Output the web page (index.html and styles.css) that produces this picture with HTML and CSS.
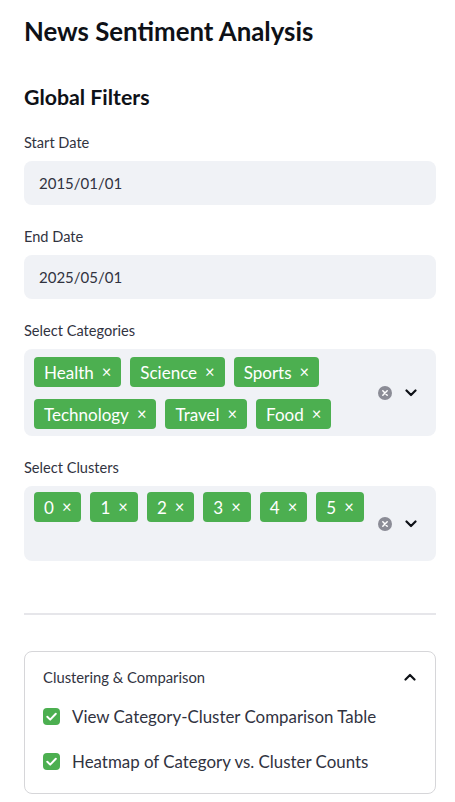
FILE: index.html
```html
<!DOCTYPE html>
<html lang="en">
<head>
<meta charset="utf-8">
<title>News Sentiment Analysis</title>
<link rel="stylesheet" href="styles.css">
</head>
<body>
<aside class="sidebar">
  <h1 class="title">News Sentiment Analysis</h1>
  <h2 class="subtitle">Global Filters</h2>

  <div class="field">
    <label class="label">Start Date</label>
    <div class="input">2015/01/01</div>
  </div>

  <div class="field">
    <label class="label">End Date</label>
    <div class="input">2025/05/01</div>
  </div>

  <div class="field">
    <label class="label">Select Categories</label>
    <div class="multiselect">
      <div class="tags">
        <span class="tag">Health<span class="tag-x">×</span></span>
        <span class="tag">Science<span class="tag-x">×</span></span>
        <span class="tag">Sports<span class="tag-x">×</span></span>
        <span class="tag">Technology<span class="tag-x">×</span></span>
        <span class="tag">Travel<span class="tag-x">×</span></span>
        <span class="tag">Food<span class="tag-x">×</span></span>
      </div>
      <div class="ms-icons">
        <svg class="clear-icon" viewBox="0 0 14 14" width="14" height="14"><circle cx="7" cy="7" r="7" fill="#8b8c96"/><path d="M4.8 4.8 L9.2 9.2 M9.2 4.8 L4.8 9.2" stroke="#fff" stroke-width="1.5" stroke-linecap="round"/></svg>
        <svg class="chev" viewBox="0 0 12 8" width="12" height="8"><path d="M1.5 1.5 L6 6 L10.5 1.5" fill="none" stroke="#0e1117" stroke-width="2.2" stroke-linecap="round" stroke-linejoin="round"/></svg>
      </div>
    </div>
  </div>

  <div class="field">
    <label class="label">Select Clusters</label>
    <div class="multiselect">
      <div class="tags tags-wrap-input">
        <span class="tag">0<span class="tag-x">×</span></span>
        <span class="tag">1<span class="tag-x">×</span></span>
        <span class="tag">2<span class="tag-x">×</span></span>
        <span class="tag">3<span class="tag-x">×</span></span>
        <span class="tag">4<span class="tag-x">×</span></span>
        <span class="tag">5<span class="tag-x">×</span></span>
        <span class="ms-input"></span>
      </div>
      <div class="ms-icons">
        <svg class="clear-icon" viewBox="0 0 14 14" width="14" height="14"><circle cx="7" cy="7" r="7" fill="#8b8c96"/><path d="M4.8 4.8 L9.2 9.2 M9.2 4.8 L4.8 9.2" stroke="#fff" stroke-width="1.5" stroke-linecap="round"/></svg>
        <svg class="chev" viewBox="0 0 12 8" width="12" height="8"><path d="M1.5 1.5 L6 6 L10.5 1.5" fill="none" stroke="#0e1117" stroke-width="2.2" stroke-linecap="round" stroke-linejoin="round"/></svg>
      </div>
    </div>
  </div>

  <hr class="divider">

  <section class="expander">
    <div class="exp-header">
      <span>Clustering &amp; Comparison</span>
      <svg class="chev" viewBox="0 0 12 8" width="12" height="8"><path d="M1.5 6.5 L6 2 L10.5 6.5" fill="none" stroke="#0e1117" stroke-width="2.2" stroke-linecap="round" stroke-linejoin="round"/></svg>
    </div>
    <div class="exp-body">
      <div class="check-row">
        <span class="checkbox"><svg viewBox="0 0 17 17" width="17" height="17"><path d="M4.3 8.8 L7.2 11.6 L12.8 5.8" fill="none" stroke="#fff" stroke-width="2" stroke-linecap="round" stroke-linejoin="round"/></svg></span>
        <span>View Category-Cluster Comparison Table</span>
      </div>
      <div class="check-row">
        <span class="checkbox"><svg viewBox="0 0 17 17" width="17" height="17"><path d="M4.3 8.8 L7.2 11.6 L12.8 5.8" fill="none" stroke="#fff" stroke-width="2" stroke-linecap="round" stroke-linejoin="round"/></svg></span>
        <span>Heatmap of Category vs. Cluster Counts</span>
      </div>
    </div>
  </section>
</aside>
</body>
</html>
```

FILE: styles.css
```css
* { box-sizing: border-box; }

html, body {
  margin: 0;
  padding: 0;
  background: #ffffff;
}

body {
  font-family: "Lato", "Noto Sans", "Liberation Sans", sans-serif;
  color: #31333f;
}

.sidebar {
  padding: 13px 19px 0 24px;
  width: 455px;
}

.title {
  margin: 0;
  font-size: 25.8px;
  line-height: 36px;
  font-weight: 700;
  color: #0e1117;
}

.subtitle {
  margin: 33px 0 0 0;
  font-size: 21.3px;
  line-height: 30px;
  font-weight: 700;
  color: #0e1117;
}

.field {
  display: flex;
  flex-direction: column;
  margin-top: 21px;
}

.subtitle + .field { margin-top: 20px; }

.label {
  font-size: 14.6px;
  line-height: 21px;
  margin-bottom: 8px;
  color: #31333f;
}

.input {
  height: 44px;
  background: #f0f2f6;
  border-radius: 8px;
  padding: 0 15px;
  display: flex;
  align-items: center;
  font-size: 15px;
  color: #31333f;
}

.multiselect {
  background: #f0f2f6;
  border-radius: 8px;
  display: flex;
  align-items: center;
  padding: 7px 0 7px 10px;
  min-height: 44px;
}

.tags {
  flex: 1;
  display: flex;
  flex-wrap: wrap;
  column-gap: 9px;
  row-gap: 12px;
  padding-top: 1px;
}

.tags-wrap-input {
  padding-top: 0;
  margin-top: -1px;
}

.ms-input {
  flex-basis: 100%;
  height: 20px;
}

.tag {
  display: inline-flex;
  align-items: center;
  height: 30px;
  padding: 0 10px 0 10px;
  background: #4caf50;
  color: #ffffff;
  border-radius: 4px;
  font-size: 17px;
  white-space: nowrap;
}

.tag-x {
  margin-left: 8px;
  font-size: 16.5px;
  line-height: 1;
}

.ms-icons {
  display: flex;
  align-items: center;
  gap: 13px;
  padding: 0 19px 0 0;
}

.clear-icon, .chev { display: block; }

.divider {
  margin: 52px 0 0 0;
  border: 0;
  border-top: 2px solid #e6e6ea;
  height: 0;
}

.expander {
  margin-top: 36px;
  border: 1px solid #d6d6d9;
  border-radius: 8px;
}

.exp-header {
  height: 49px;
  display: flex;
  align-items: center;
  justify-content: space-between;
  padding: 0 19px 0 18px;
  font-size: 14.8px;
  color: #31333f;
}

.exp-body {
  padding: 3px 18px 20px 18px;
  display: flex;
  flex-direction: column;
  gap: 21px;
}

.check-row {
  display: flex;
  align-items: center;
  gap: 12px;
  height: 24px;
  font-size: 16.9px;
  color: #31333f;
}

.checkbox {
  width: 17px;
  height: 17px;
  border-radius: 4px;
  background: #4caf50;
  display: block;
  flex: none;
}

.checkbox svg { display: block; }
```
